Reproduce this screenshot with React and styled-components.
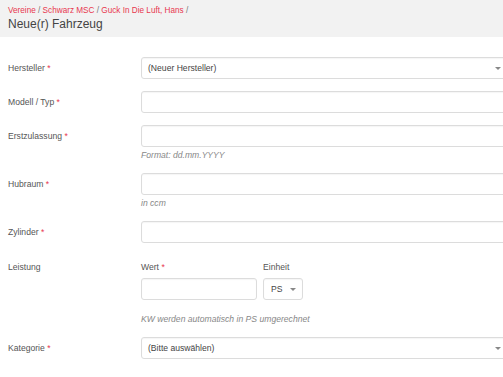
import React from 'react';
import styled, { createGlobalStyle } from 'styled-components';

const GlobalStyle = createGlobalStyle`
  html, body {
    margin: 0;
    padding: 0;
    background: #fff;
    overflow: hidden;
  }
  body {
    font-family: "Liberation Sans", Arial, sans-serif;
    color: #555;
  }
`;

const Header = styled.div`
  background: #f2f2f2;
  height: 37px;
  padding: 5px 8px 0;
  box-sizing: border-box;
`;

const Breadcrumb = styled.div`
  font-size: 8.2px;
  line-height: 12px;
  color: #777;
`;

const Crumb = styled.a`
  color: #e8374f;
  text-decoration: none;
`;

const Title = styled.h1`
  margin: 0;
  font-size: 12px;
  line-height: 15px;
  font-weight: normal;
  color: #444;
`;

const Page = styled.div`
  width: 503px;
  overflow: hidden;
`;

const Form = styled.div`
  padding: 20px 8px 0;
`;

const Row = styled.div`
  display: grid;
  grid-template-columns: 133px 370px;
  align-items: start;
  margin-bottom: 12px;
`;

const Label = styled.label`
  font-size: 8.6px;
  line-height: ${props => (props.sub ? '14px' : '22px')};
  padding-top: ${props => (props.sub ? 5 : 0)}px;
  color: #555;
`;

const Req = styled.span`
  color: #e8374f;
`;

const Field = styled.div`
  display: flex;
  flex-direction: column;
`;

const Input = styled.div`
  box-sizing: border-box;
  height: 22px;
  width: ${props => props.w || '100%'};
  border: 1px solid #dcdcdc;
  border-radius: 3px;
  background: #fff;
  box-shadow: inset 0 1px 1px rgba(0, 0, 0, 0.04);
`;

const Select = styled(Input)`
  position: relative;
  font-size: 8.6px;
  line-height: 20px;
  color: #444;
  padding-left: ${props => props.pl || 6}px;
  &::after {
    content: '';
    position: absolute;
    right: ${props => props.cr || 9}px;
    top: 9px;
    border-left: 3px solid transparent;
    border-right: 3px solid transparent;
    border-top: 3px solid #888;
  }
`;

const Help = styled.div`
  font-size: 8.6px;
  font-style: italic;
  color: #888;
  line-height: 11px;
  margin-top: ${props => props.mt || 3}px;
`;

const SubGroup = styled.div`
  display: flex;
  gap: 6px;
`;

const SubField = styled.div`
  display: flex;
  flex-direction: column;
`;

const SubLabel = styled.div`
  font-size: 8.6px;
  line-height: 14px;
  padding-top: 5px;
  margin-bottom: 4px;
  color: #555;
`;

export default function App() {
  return (
    <Page>
      <GlobalStyle />
      <Header>
        <Breadcrumb>
          <Crumb>Vereine</Crumb> / <Crumb>Schwarz MSC</Crumb> / <Crumb>Guck In Die Luft, Hans</Crumb> /
        </Breadcrumb>
        <Title>Neue(r) Fahrzeug</Title>
      </Header>
      <Form>
        <Row>
          <Label>Hersteller <Req>*</Req></Label>
          <Select>(Neuer Hersteller)</Select>
        </Row>
        <Row>
          <Label>Modell / Typ <Req>*</Req></Label>
          <Input />
        </Row>
        <Row>
          <Label>Erstzulassung <Req>*</Req></Label>
          <Field>
            <Input />
            <Help>Format: dd.mm.YYYY</Help>
          </Field>
        </Row>
        <Row>
          <Label>Hubraum <Req>*</Req></Label>
          <Field>
            <Input />
            <Help>in ccm</Help>
          </Field>
        </Row>
        <Row>
          <Label>Zylinder <Req>*</Req></Label>
          <Input />
        </Row>
        <Row>
          <Label sub>Leistung</Label>
          <Field>
            <SubGroup>
              <SubField>
                <SubLabel>Wert <Req>*</Req></SubLabel>
                <Input w="116px" />
              </SubField>
              <SubField>
                <SubLabel>Einheit</SubLabel>
                <Select w="40px" pl={7} cr={6}>PS</Select>
              </SubField>
            </SubGroup>
            <Help mt={14}>KW werden automatisch in PS umgerechnet</Help>
          </Field>
        </Row>
        <Row>
          <Label>Kategorie <Req>*</Req></Label>
          <Select>(Bitte auswählen)</Select>
        </Row>
      </Form>
    </Page>
  );
}
